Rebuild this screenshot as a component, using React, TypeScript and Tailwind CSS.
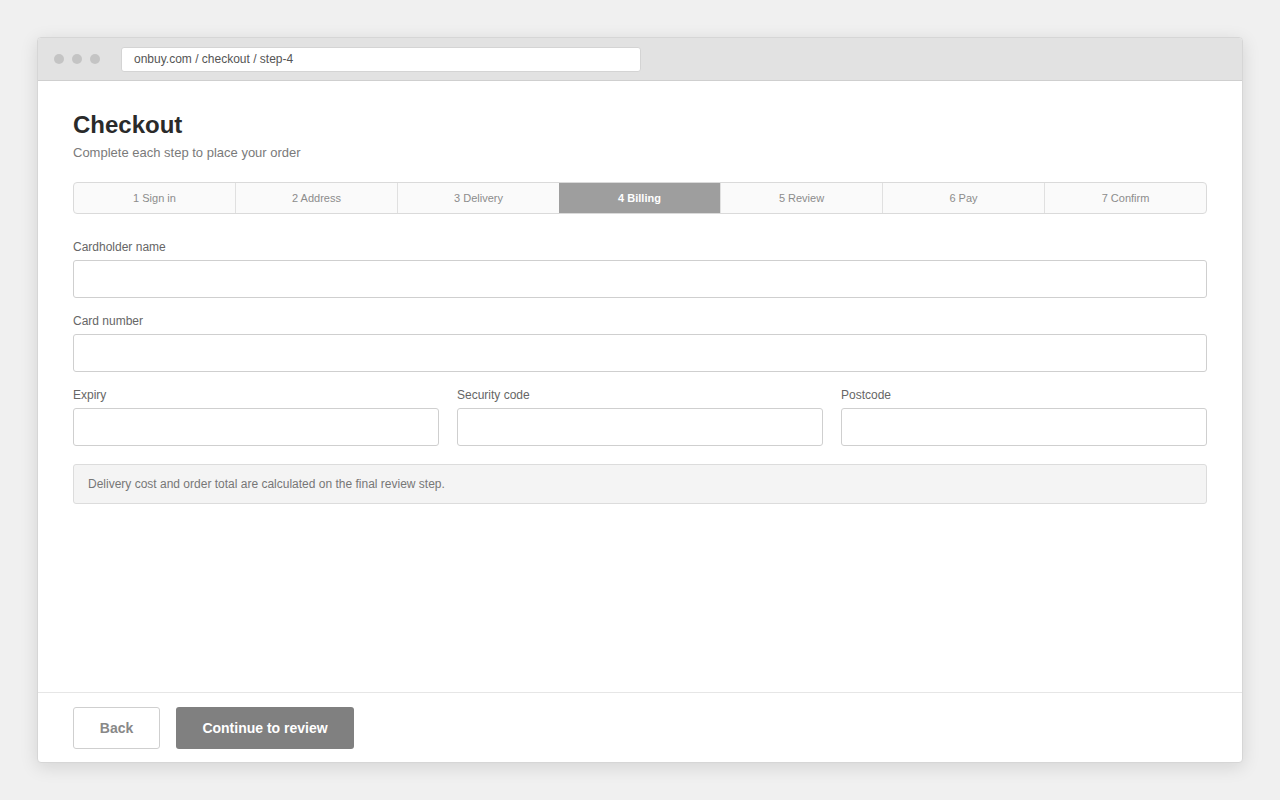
const steps = ['1 Sign in', '2 Address', '3 Delivery', '4 Billing', '5 Review', '6 Pay', '7 Confirm']

function Field({ label }: { label: string }) {
  return (
    <div className="flex flex-col">
      <label className="text-[12px] leading-[16px] text-[#666]">{label}</label>
      <input
        type="text"
        className="mt-[5px] h-[38px] w-full rounded-[3px] border border-[#cfcfcf] bg-white px-3 text-[13px] outline-none"
      />
    </div>
  )
}

export default function App() {
  return (
    <div
      className="flex h-[800px] w-[1280px] items-start justify-center bg-[#f0f0f0] pt-[37px]"
      style={{ fontFamily: '"Liberation Sans", Arial, sans-serif' }}
    >
      <div className="flex h-[726px] w-[1206px] flex-col overflow-hidden rounded-[4px] border border-[#d6d6d6] bg-white shadow-[0_4px_18px_rgba(0,0,0,0.12)]">
        <div className="flex h-[43px] shrink-0 items-center border-b border-[#cfcfcf] bg-[#e2e2e2] px-[16px]">
          <div className="flex gap-2">
            <span className="h-[10px] w-[10px] rounded-full bg-[#c4c4c4]" />
            <span className="h-[10px] w-[10px] rounded-full bg-[#c4c4c4]" />
            <span className="h-[10px] w-[10px] rounded-full bg-[#c4c4c4]" />
          </div>
          <div className="ml-[21px] flex h-[25px] w-[520px] items-center rounded-[3px] border border-[#d4d4d4] bg-white px-3 text-[12px] text-[#555]">
            onbuy.com / checkout / step-4
          </div>
        </div>

        <div className="flex flex-1 flex-col px-[35px] pt-[29px]">
          <h1 className="text-[24px] font-bold leading-[29px] text-[#2a2a2a]">Checkout</h1>
          <p className="mt-[5px] text-[13px] leading-[18px] text-[#7a7a7a]">Complete each step to place your order</p>

          <div className="mt-[20px] flex h-[32px] overflow-hidden rounded-[4px] border border-[#dadada] bg-[#fafafa]">
            {steps.map((s, i) => (
              <div
                key={s}
                className={
                  i === 3
                    ? 'flex flex-1 items-center justify-center bg-[#9e9e9e] text-[11px] font-bold text-white'
                    : i === 0
                      ? 'flex flex-1 items-center justify-center text-[11px] text-[#8c8c8c]'
                      : 'flex flex-1 items-center justify-center border-l border-[#e0e0e0] text-[11px] text-[#8c8c8c]'
                }
              >
                {s}
              </div>
            ))}
          </div>

          <div className="mt-[25px] flex flex-col gap-[15px]">
            <Field label="Cardholder name" />
            <Field label="Card number" />
            <div className="grid grid-cols-3 gap-[18px]">
              <Field label="Expiry" />
              <Field label="Security code" />
              <Field label="Postcode" />
            </div>
          </div>

          <div className="mt-[18px] flex h-[40px] items-center rounded-[3px] border border-[#dcdcdc] bg-[#f4f4f4] px-[14px] text-[12px] text-[#777]">
            Delivery cost and order total are calculated on the final review step.
          </div>
        </div>

        <div className="flex shrink-0 gap-4 border-t border-[#e6e6e6] px-[35px] pb-[13px] pt-[14px]">
          <button
            type="button"
            className="h-[42px] w-[87px] rounded-[3px] border border-[#cfcfcf] bg-white text-[14px] font-bold text-[#888]"
          >
            Back
          </button>
          <button
            type="button"
            className="h-[42px] w-[178px] rounded-[3px] bg-[#808080] text-[14px] font-bold text-white"
          >
            Continue to review
          </button>
        </div>
      </div>
    </div>
  )
}
